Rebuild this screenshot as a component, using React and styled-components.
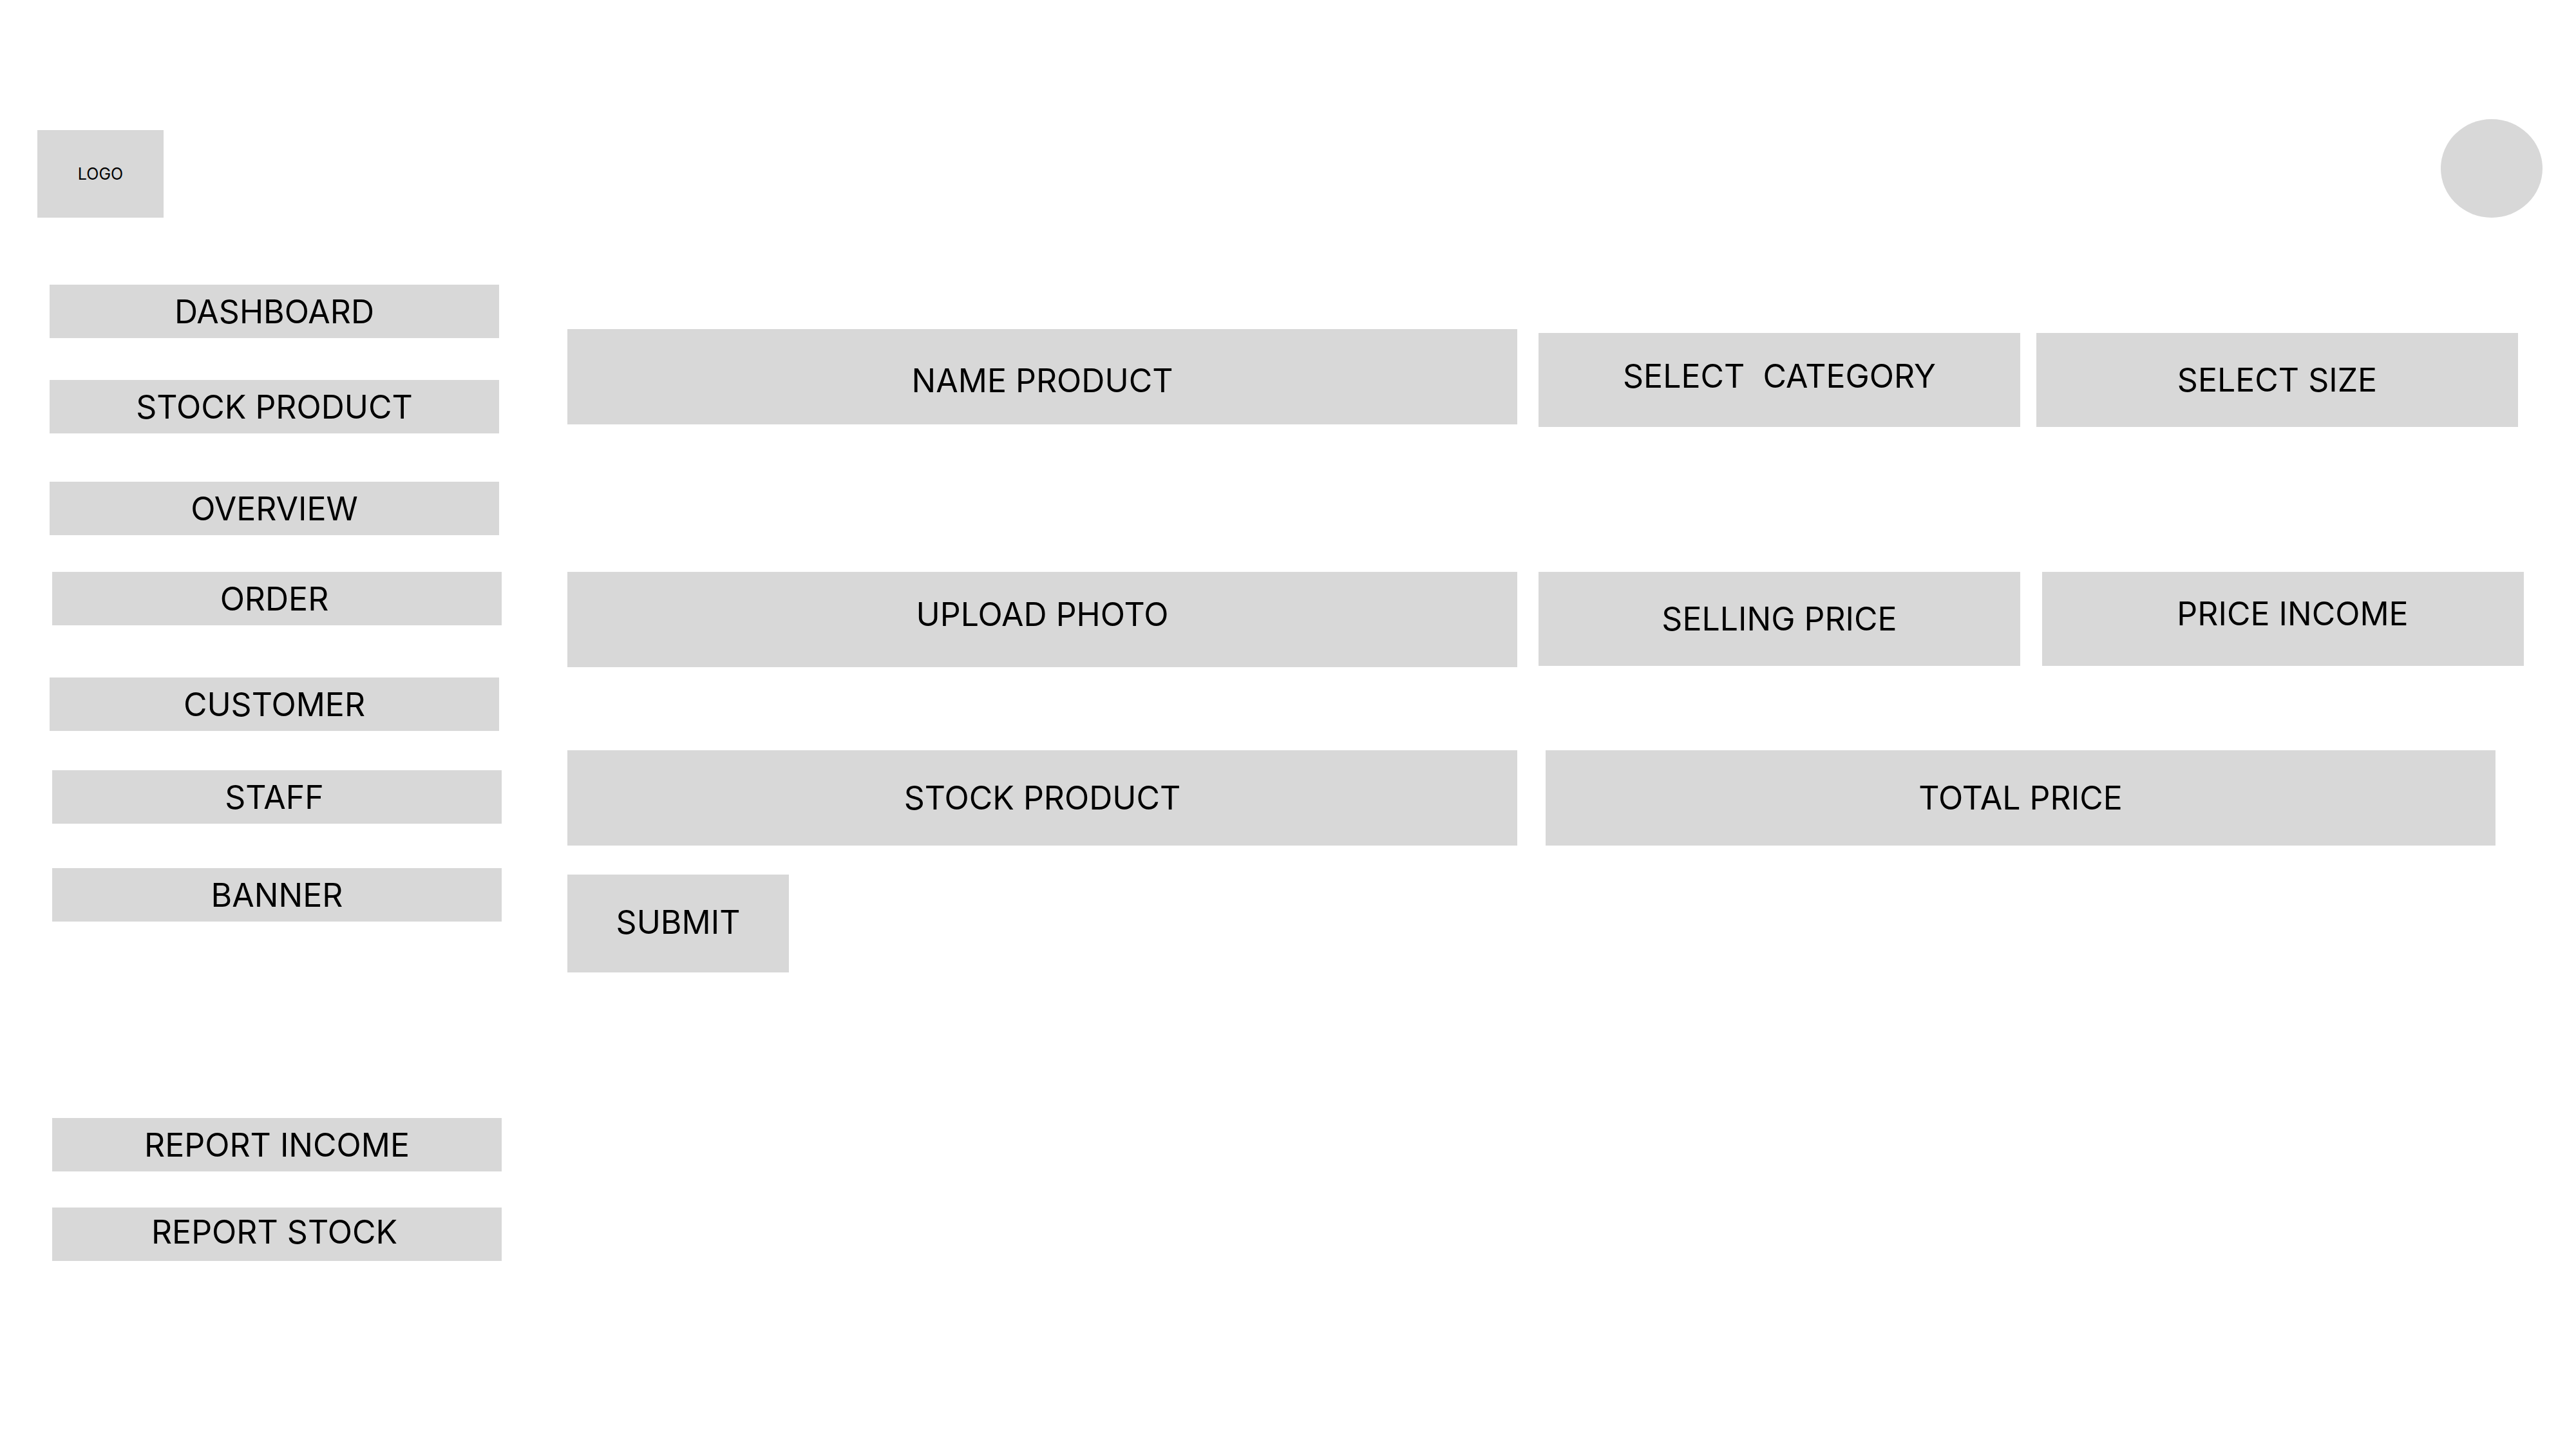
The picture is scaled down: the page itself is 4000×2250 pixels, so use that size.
import React from 'react';
import styled, { createGlobalStyle, css } from 'styled-components';

const GlobalStyle = createGlobalStyle`
  *, *::before, *::after { box-sizing: border-box; }
  body {
    margin: 0;
    background: #fff;
    color: #000;
    font-family: Inter, 'Liberation Sans', sans-serif;
    font-size: 50px;
    line-height: 60px;
  }
`;

const Page = styled.div`
  min-height: 100vh;
  padding-top: 185px;
`;

const Header = styled.header`
  display: flex;
  align-items: flex-end;
  justify-content: space-between;
  padding: 0 52px 0 58px;
`;

const Logo = styled.a`
  display: flex;
  align-items: center;
  justify-content: center;
  width: 196px;
  height: 136px;
  background: #d8d8d8;
  color: inherit;
  font-size: 25px;
  line-height: 30px;
  text-decoration: none;
`;

const Avatar = styled.button`
  width: 158px;
  height: 153px;
  padding: 0;
  border: 0;
  border-radius: 50%;
  background: #d8d8d8;
`;

const Body = styled.div`
  display: flex;
  align-items: flex-start;
  gap: 102px;
  padding: 104px 0 0 77px;
`;

const Nav = styled.nav`
  flex: 0 0 702px;
`;

const NavList = styled.ul`
  display: flex;
  flex-direction: column;
  margin: 0;
  padding: 0;
  list-style: none;
`;

const NavItem = styled.li`
  margin-top: ${(p) => p.$space || 0}px;
  padding: ${(p) => (p.$indent ? '0 0 0 4px' : '0 4px 0 0')};
`;

const NavLink = styled.a`
  display: flex;
  align-items: center;
  justify-content: center;
  height: 83px;
  padding: ${(p) => (p.$high ? '0 8px 8px 0' : p.$left ? '0 8px 0 0' : '0')};
  background: #d8d8d8;
  color: inherit;
  text-decoration: none;
`;

const Form = styled.form`
  flex: 1;
  min-width: 0;
  padding-top: 69px;
`;

const Row = styled.div`
  display: flex;
  align-items: ${(p) => p.$align || 'flex-start'};
  min-height: ${(p) => (p.$align ? 152 : 148)}px;
  margin-bottom: ${(p) => p.$below}px;
  padding-right: ${(p) => p.$end}px;
`;

const Gap = styled.div`
  flex: 0 0 ${(p) => p.$size}px;
`;

const box = css`
  flex: ${(p) => (p.$wide ? 1475 : 748)} 1 0;
  align-self: ${(p) => (p.$top ? 'flex-start' : 'auto')};
  min-width: 0;
  height: ${(p) => (p.$wide ? 148 : 146)}px;
  margin: 0;
  padding: ${(p) => p.$pad || '0'};
  border: 0;
  border-radius: 0;
  background: #d8d8d8;
  color: #000;
  font: inherit;
  text-align: center;
  text-indent: ${(p) => p.$indent || 0}px;
`;

const Field = styled.input`
  ${box}
  &::placeholder {
    color: #000;
    opacity: 1;
  }
`;

const Choice = styled.select`
  ${box}
  appearance: none;
  text-align-last: center;
`;

const Upload = styled.label`
  ${box}
  display: flex;
  align-items: center;
  justify-content: center;
`;

const FileInput = styled.input`
  position: absolute;
  width: 1px;
  height: 1px;
  overflow: hidden;
  clip-path: inset(50%);
`;

const Submit = styled.button`
  width: 344px;
  height: 152px;
  padding: 0 0 4px;
  border: 0;
  background: #d8d8d8;
  color: #000;
  font: inherit;
`;

const links = [
  { label: 'DASHBOARD' },
  { label: 'STOCK PRODUCT', space: 65 },
  { label: 'OVERVIEW', space: 75 },
  { label: 'ORDER', space: 57, indent: true, left: true },
  { label: 'CUSTOMER', space: 81 },
  { label: 'STAFF', space: 61, indent: true, left: true },
  { label: 'BANNER', space: 69, indent: true },
  { label: 'REPORT INCOME', space: 305, indent: true },
  { label: 'REPORT STOCK', space: 56, indent: true, high: true },
];

export default function App() {
  return (
    <Page>
      <GlobalStyle />
      <Header>
        <Logo href="#">LOGO</Logo>
        <Avatar type="button" aria-label="Account" />
      </Header>
      <Body>
        <Nav>
          <NavList>
            {links.map((l) => (
              <NavItem key={l.label} $space={l.space} $indent={l.indent}>
                <NavLink href="#" $left={l.left} $high={l.high}>
                  {l.label}
                </NavLink>
              </NavItem>
            ))}
          </NavList>
        </Nav>
        <Form onSubmit={(e) => e.preventDefault()}>
          <Row $align="flex-end" $below={225} $end={90}>
            <Field $wide $top $pad="12px 0 0" placeholder="NAME PRODUCT" aria-label="Name product" />
            <Gap $size={33} />
            <Choice $pad="0 0 12px" aria-label="Category">
              <option>{'SELECT\u00a0 CATEGORY'}</option>
            </Choice>
            <Gap $size={25} />
            <Choice aria-label="Size">
              <option>SELECT SIZE</option>
            </Choice>
          </Row>
          <Row $below={129} $end={81}>
            <Upload $wide $pad="0 0 16px">
              UPLOAD PHOTO
              <FileInput type="file" accept="image/*" />
            </Upload>
            <Gap $size={33} />
            <Field placeholder="SELLING PRICE" aria-label="Selling price" />
            <Gap $size={34} />
            <Field $pad="0 0 16px" $indent={30} placeholder="PRICE INCOME" aria-label="Price income" />
          </Row>
          <Row $below={45} $end={125}>
            <Field $wide placeholder="STOCK PRODUCT" aria-label="Stock product" />
            <Gap $size={44} />
            <Field $wide placeholder="TOTAL PRICE" aria-label="Total price" />
          </Row>
          <Submit type="submit">SUBMIT</Submit>
        </Form>
      </Body>
    </Page>
  );
}
